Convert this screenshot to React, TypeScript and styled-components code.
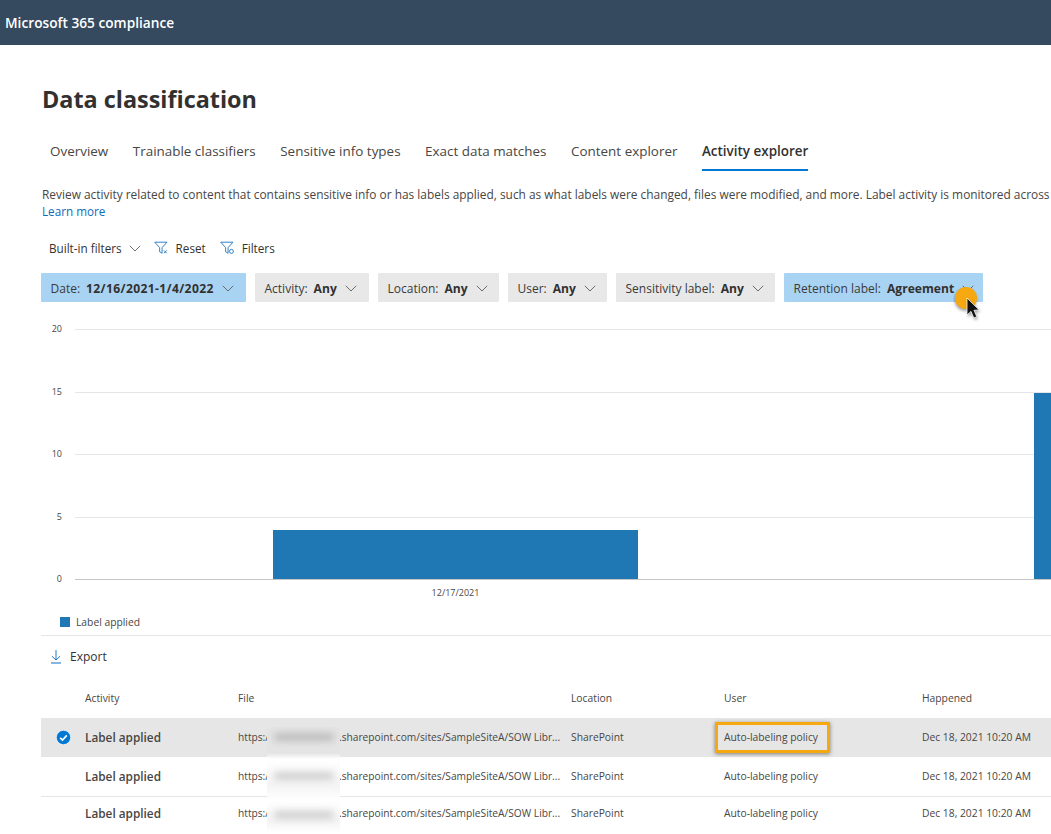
import React from "react";
import styled, { createGlobalStyle } from "styled-components";

const Global = createGlobalStyle`
  html, body { margin: 0; padding: 0; background: #fff; }
  body { font-family: "Open Sans", "Noto Sans", "Liberation Sans", sans-serif; color: #323130; }
  #root { width: 1051px; height: 834px; overflow: hidden; }
`;
const Page = styled.div`width: 1051px; height: 834px; overflow: hidden; position: relative; background: #fff;`;
const TopBar = styled.header`
  height: 45px; background: #354a5f; color: #fff; display: flex; align-items: center;
  padding-left: 5px; font-size: 13.7px; font-weight: 600; box-sizing: border-box;
`;
const Main = styled.main`padding-left: 41px; width: 1010px; display: flex; flex-direction: column;`;
const Title = styled.h1`margin: 37px 0 0 1px; font-size: 23.4px; line-height: 34px; font-weight: 700; color: #323130;`;
const Tabs = styled.nav`display: flex; gap: 24.5px; margin-top: 26px; padding-left: 9px; height: 36px;`;
const Tab = styled.div<{ $active?: boolean }>`
  font-size: 13.45px; line-height: 18px; height: 29px; padding-bottom: 9px; box-sizing: border-box; white-space: nowrap;
  font-weight: ${p => (p.$active ? 600 : 400)}; color: ${p => (p.$active ? "#323130" : "#484644")};
  border-bottom: ${p => (p.$active ? "2px solid #0078d4" : "none")};
`;
const Desc = styled.p`margin: 8px 0 0 1px; font-size: 11.9px; line-height: 17px; color: #484644; white-space: nowrap;`;
const Learn = styled.a`margin-left: 1px; font-size: 11.7px; line-height: 17px; color: #0f6cbd; display: block;`;
const Toolbar = styled.div`display: flex; align-items: center; height: 20px; margin-top: 18px; padding-left: 8px; font-size: 11.7px; color: #323130;`;
const ToolItem = styled.div<{ $gap: number }>`display: flex; align-items: center; gap: 7px; margin-right: ${p => p.$gap}px;`;
const Filters = styled.div`display: flex; gap: 9px; margin-top: 15px; height: 29px;`;
const Pill = styled.div<{ $on?: boolean; $w: number }>`
  width: ${p => p.$w}px; box-sizing: border-box; padding: 1px 0 0 9.5px; display: flex; align-items: center;
  background: ${p => (p.$on ? "#a9d3f2" : "#e8e8e8")}; border-radius: 1px; font-size: 12px; color: #3b3a39; white-space: nowrap;
  svg { margin-left: 8px; flex: none; }
`;
const PillValue = styled.b<{ $track?: boolean }>`
  font-weight: 700; font-size: 12.1px; color: #323130; margin-left: 6px;
  letter-spacing: ${p => (p.$track ? "0.37px" : "0")};
`;
const ChartBox = styled.div`margin: 19px 0 0 -41px; height: 289px; width: 1051px;`;
const ChartSvg = styled.svg`display: block; text { font-family: "Open Sans", "Noto Sans", sans-serif; font-size: 9px; fill: #484644; }`;
const Legend = styled.div`height: 25px; display: flex; align-items: center; gap: 6px; padding: 0 0 2px 19px; font-size: 10.3px; color: #484644; box-sizing: border-box;`;
const Swatch = styled.span`width: 10px; height: 10px; background: #1f77b4; display: block;`;
const Section = styled.div`border-top: 1px solid #e6e6e6; width: 1010px;`;
const ExportRow = styled.div`display: flex; align-items: center; gap: 8px; height: 42px; padding: 0 0 2px 9px; box-sizing: border-box; font-size: 12px; color: #323130;`;
const Table = styled.div`position: relative; width: 1010px;`;
const Row = styled.div<{ $h: number; $sel?: boolean; $line?: boolean; $head?: boolean }>`
  display: grid; grid-template-columns: 44px 153px 333px 153px 198px 1fr; align-items: center;
  height: ${p => p.$h}px; box-sizing: border-box; padding-bottom: ${p => (p.$head ? 0 : 2)}px;
  background: ${p => (p.$sel ? "#e6e6e6" : "transparent")};
  border-bottom: ${p => (p.$line ? "1px solid #e6e6e6" : "none")};
  font-size: 10.3px; color: #484644; white-space: nowrap;
`;
const CheckCell = styled.div`display: flex; align-items: center; padding: 2px 0 0 14.5px;`;
const ActivityCell = styled.div`font-size: 11.8px; font-weight: 600; color: #484644;`;
const FileCell = styled.div`display: flex; font-size: 10.2px;`;
const FileGap = styled.span`width: 70px; flex: none;`;
const Highlight = styled.span`
  position: relative; display: inline-block;
  &::after { content: ""; position: absolute; left: -9px; right: -12px; top: -8px; bottom: -9px; border: 3px solid #f5a80f; box-shadow: 0 1px 4px rgba(0,0,0,.45); }
`;
const Smear = styled.div`
  position: absolute; left: 226px; top: 49px; width: 73px; height: 106px; overflow: hidden;
  background: linear-gradient(#e4e4e4 0, #e4e4e4 26px, #fff 32px, #f4f4f4 58px, #fff 74px, #f4f4f4 94px, #fff 106px);
  display: flex; flex-direction: column; align-items: center; padding-top: 6px; gap: 31px; box-sizing: border-box;
`;
const SmearBlob = styled.div<{ $tone: string }>`
  width: 60px; height: 8px; border-radius: 4px; background: ${p => p.$tone}; filter: blur(3.5px); flex: none;
`;
const Cursor = styled.div`position: absolute; left: 953px; top: 284px; width: 32px; height: 40px;`;

const Chevron = ({ color = "#605e5c" }: { color?: string }) => (
  <svg width="12" height="7" viewBox="0 0 12 7" fill="none"><path d="M.8.8 6 6l5.2-5.2" stroke={color} strokeWidth=".9" /></svg>
);
const FunnelX = () => (
  <svg width="15" height="14" viewBox="0 0 16 14" fill="none">
    <path d="M.8.8h13L8.6 6.6v6L6 11V6.6L.8.8Z" stroke="#0f6cbd" strokeWidth=".9" />
    <path d="m10.6 9.6 3 3m0-3-3 3" stroke="#0f6cbd" strokeWidth=".9" />
  </svg>
);
const FunnelO = () => (
  <svg width="15" height="14" viewBox="0 0 16 14" fill="none">
    <path d="M.8.8h13L8.6 6.6v6L6 11V6.6L.8.8Z" stroke="#0f6cbd" strokeWidth=".9" />
    <circle cx="12.2" cy="10.6" r="2.1" fill="#fff" stroke="#0f6cbd" strokeWidth=".9" />
  </svg>
);
const ExportIcon = () => (
  <svg width="12" height="15" viewBox="0 0 12 15" fill="none">
    <path d="M6 1v10M2 7.2 6 11l4-3.8" stroke="#0f6cbd" strokeWidth=".9" /><path d="M1 14h10" stroke="#0f6cbd" />
  </svg>
);
const Check = () => (
  <svg width="15" height="15" viewBox="0 0 15 15">
    <circle cx="7.5" cy="7.5" r="7.2" fill="#0078d4" stroke="#fff" strokeWidth=".7" />
    <path d="m4.2 7.8 2.3 2.2 4.3-4.6" fill="none" stroke="#fff" strokeWidth="1.7" />
  </svg>
);

const pills: { k: string; v: string; w: number; on?: boolean }[] = [
  { k: "Date:", v: "12/16/2021-1/4/2022", w: 205, on: true },
  { k: "Activity:", v: "Any", w: 114 },
  { k: "Location:", v: "Any", w: 121 },
  { k: "User:", v: "Any", w: 99 },
  { k: "Sensitivity label:", v: "Any", w: 159 },
  { k: "Retention label:", v: "Agreement", w: 199, on: true },
];
const tabs = ["Overview", "Trainable classifiers", "Sensitive info types", "Exact data matches", "Content explorer"];
const grid = [{ y: 8, l: "20" }, { y: 71, l: "15" }, { y: 133, l: "10" }, { y: 196, l: "5" }, { y: 258, l: "0" }];

const DataRow = ({ sel, line, hi, h }: { sel?: boolean; line?: boolean; hi?: boolean; h: number }) => (
  <Row $h={h} $sel={sel} $line={line}>
    <CheckCell>{sel && <Check />}</CheckCell>
    <ActivityCell>Label applied</ActivityCell>
    <FileCell>https:/<FileGap />.sharepoint.com/sites/SampleSiteA/SOW Libr...</FileCell>
    <div>SharePoint</div>
    <div>{hi ? <Highlight>Auto-labeling policy</Highlight> : "Auto-labeling policy"}</div>
    <div>Dec 18, 2021 10:20 AM</div>
  </Row>
);

export default function App() {
  return (
    <Page>
      <Global />
      <TopBar>Microsoft 365 compliance</TopBar>
      <Main>
        <Title>Data classification</Title>
        <Tabs>
          {tabs.map(t => <Tab key={t}>{t}</Tab>)}
          <Tab $active>Activity explorer</Tab>
        </Tabs>
        <Desc>Review activity related to content that contains sensitive info or has labels applied, such as what labels were changed, files were modified, and more. Label activity is monitored across</Desc>
        <Learn>Learn more</Learn>
        <Toolbar>
          <ToolItem $gap={13}>Built-in filters <Chevron /></ToolItem>
          <ToolItem $gap={14}><FunnelX />Reset</ToolItem>
          <ToolItem $gap={0}><FunnelO />Filters</ToolItem>
        </Toolbar>
        <Filters>
          {pills.map(p => (
            <Pill key={p.k} $on={p.on} $w={p.w}>
              {p.k}<PillValue $track={p.k === "Date:"}>{p.v}</PillValue><Chevron />
            </Pill>
          ))}
        </Filters>
        <ChartBox>
          <ChartSvg width="1051" height="289" viewBox="0 0 1051 289">
            {grid.map(g => (
              <g key={g.l}>
                <line x1="75" x2="1051" y1={g.y + .5} y2={g.y + .5} stroke={g.l === "0" ? "#c8c6c4" : "#e6e6e6"} />
                <text x="62" y={g.y + 3} textAnchor="end">{g.l}</text>
              </g>
            ))}
            <rect x="273" y="209" width="365" height="49" fill="#1f77b4" />
            <rect x="1034" y="72" width="17" height="186" fill="#1f77b4" />
            <text x="455.5" y="275" textAnchor="middle">12/17/2021</text>
          </ChartSvg>
        </ChartBox>
        <Legend><Swatch />Label applied</Legend>
        <Section>
          <ExportRow><ExportIcon />Export</ExportRow>
          <Table>
            <Row $h={40} $head>
              <span /><div>Activity</div><div>File</div><div>Location</div><div>User</div><div>Happened</div>
            </Row>
            <DataRow h={39} sel hi />
            <DataRow h={40} line />
            <DataRow h={34} />
            <Smear><SmearBlob $tone="#bdbdbd" /><SmearBlob $tone="#d0d0d0" /><SmearBlob $tone="#d0d0d0" /></Smear>
          </Table>
        </Section>
      </Main>
      <Cursor>
        <svg width="32" height="40" viewBox="0 0 32 40">
          <defs><filter id="s" x="-50%" y="-50%" width="200%" height="200%"><feGaussianBlur stdDeviation="1.6" /></filter></defs>
          <circle cx="13.5" cy="14" r="11" fill="#000" opacity=".35" filter="url(#s)" transform="translate(-1 2)" />
          <circle cx="13" cy="14" r="11" fill="#f5a80f" />
          <path d="M14 14v17l4-3.6 2.8 6.6 3-1.3-2.8-6.4 5.2-.4Z" fill="#000" opacity=".4" filter="url(#s)" transform="translate(1 2)" />
          <path d="M14 14v17l4-3.6 2.8 6.6 3-1.3-2.8-6.4 5.2-.4Z" fill="#111" stroke="#fff" strokeWidth=".8" />
        </svg>
      </Cursor>
    </Page>
  );
}
